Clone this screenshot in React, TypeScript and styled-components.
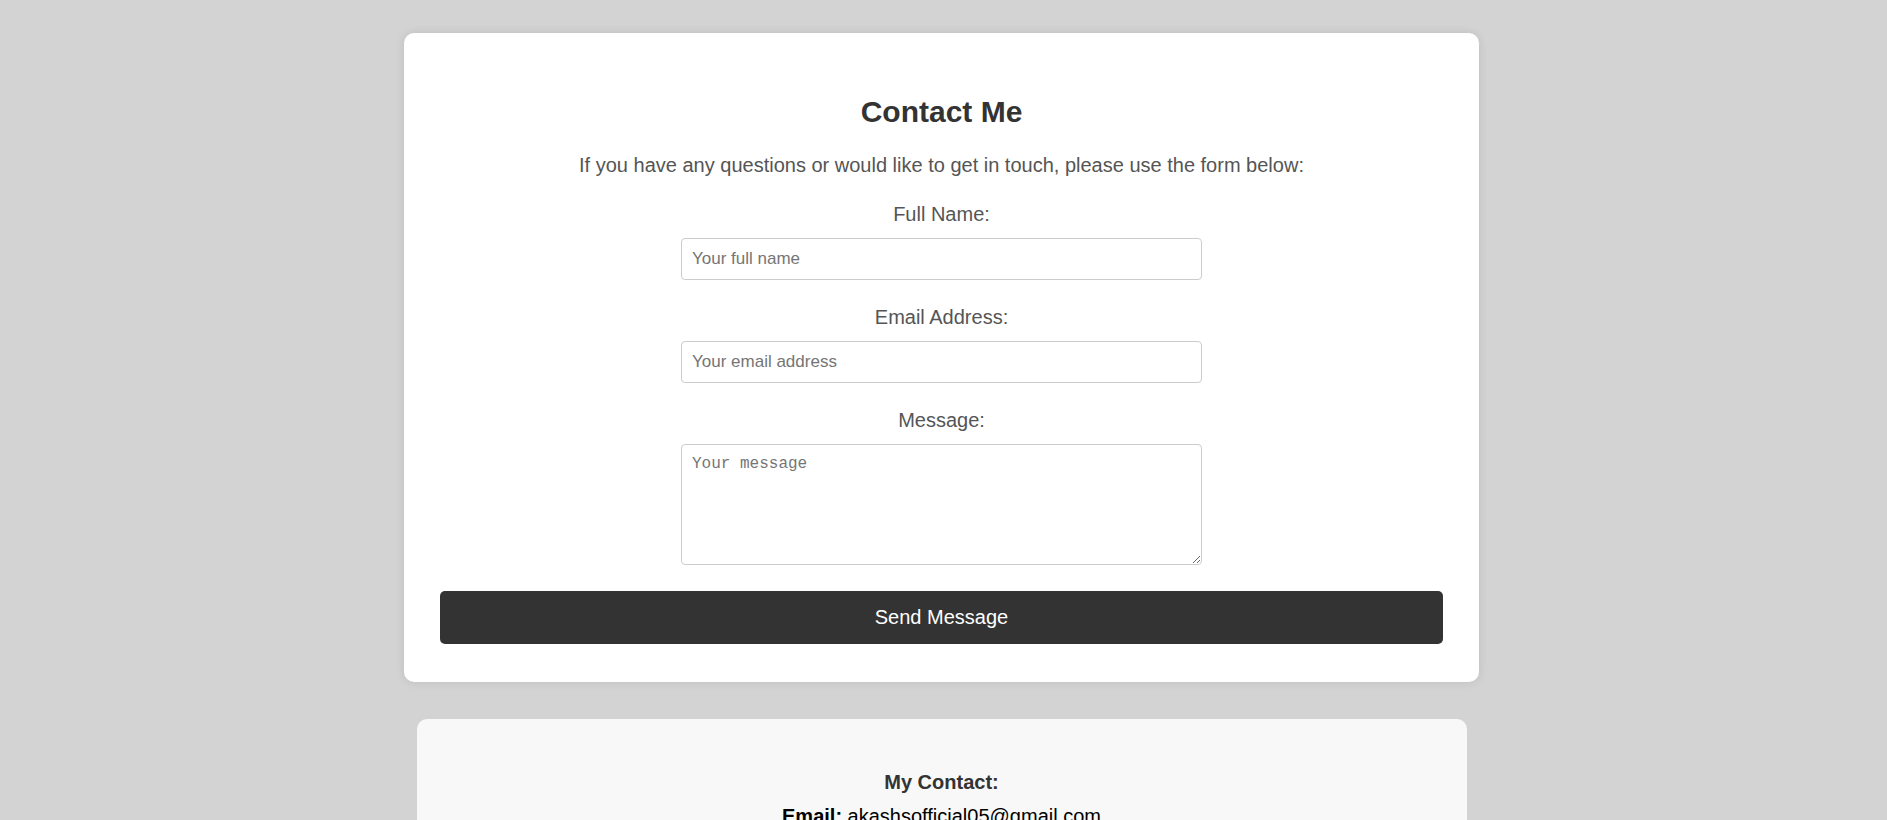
import React from "react";
import styled, { createGlobalStyle } from "styled-components";

const GlobalStyle = createGlobalStyle`
  html, body {
    margin: 0;
    padding: 0;
    background: #d3d3d3;
    font-family: "Liberation Sans", Arial, sans-serif;
  }
  * { box-sizing: border-box; }
`;

const Page = styled.main`
  display: flex;
  flex-direction: column;
  align-items: center;
  padding: 33px 4px 0 0;
  gap: 37px;
  min-height: 820px;
`;

const Card = styled.section`
  width: 1075px;
  background: #fff;
  border-radius: 10px;
  box-shadow: 0 0 10px rgba(0, 0, 0, 0.1);
  padding: 62px 36px 38px;
  display: flex;
  flex-direction: column;
  align-items: center;
  text-align: center;
`;

const Title = styled.h2`
  margin: 0 0 25px;
  font-size: 30px;
  line-height: 34px;
  font-weight: 700;
  color: #333;
`;

const Intro = styled.p`
  margin: 0 0 26px;
  font-size: 20px;
  line-height: 23px;
  color: #555;
`;

const Form = styled.form`
  width: 100%;
  display: flex;
  flex-direction: column;
  align-items: center;
`;

const Field = styled.div`
  display: flex;
  flex-direction: column;
  align-items: center;
  gap: 12px;
  margin-bottom: 26px;
`;

const Label = styled.label`
  font-size: 20px;
  line-height: 23px;
  color: #555;
`;

const Input = styled.input`
  width: 521px;
  height: 42px;
  padding: 0 10px;
  border: 1px solid #ccc;
  border-radius: 4px;
  font-family: "Liberation Sans", Arial, sans-serif;
  font-size: 17px;
  color: #333;
  background: #fff;
  &::placeholder { color: #757575; }
`;

const TextArea = styled.textarea`
  width: 521px;
  height: 121px;
  padding: 10px;
  border: 1px solid #ccc;
  border-radius: 4px;
  font-family: "Liberation Mono", "DejaVu Sans Mono", monospace;
  font-size: 16px;
  color: #333;
  background: #fff;
  resize: both;
  &::placeholder { color: #757575; }
`;

const SubmitButton = styled.button`
  width: 100%;
  height: 53px;
  border: none;
  border-radius: 5px;
  background: #333;
  color: #fff;
  font-family: "Liberation Sans", Arial, sans-serif;
  font-size: 20px;
  cursor: pointer;
`;

const InfoCard = styled.section`
  width: 1050px;
  background: #f8f8f8;
  border-radius: 10px;
  padding: 52px 36px 36px;
  display: flex;
  flex-direction: column;
  align-items: center;
  text-align: center;
  gap: 11px;
`;

const InfoTitle = styled.h3`
  margin: 0;
  font-size: 20px;
  line-height: 23px;
  font-weight: 700;
  color: #333;
`;

const InfoLine = styled.p`
  margin: 0;
  font-size: 20px;
  line-height: 23px;
  color: #000;
  b { font-weight: 700; }
`;

export default function App() {
  return (
    <>
      <GlobalStyle />
      <Page>
        <Card>
          <Title>Contact Me</Title>
          <Intro>
            If you have any questions or would like to get in touch, please use the form below:
          </Intro>
          <Form onSubmit={(e) => e.preventDefault()}>
            <Field>
              <Label htmlFor="name">Full Name:</Label>
              <Input id="name" type="text" placeholder="Your full name" />
            </Field>
            <Field>
              <Label htmlFor="email">Email Address:</Label>
              <Input id="email" type="email" placeholder="Your email address" />
            </Field>
            <Field>
              <Label htmlFor="message">Message:</Label>
              <TextArea id="message" placeholder="Your message" />
            </Field>
            <SubmitButton type="submit">Send Message</SubmitButton>
          </Form>
        </Card>
        <InfoCard>
          <InfoTitle>My Contact:</InfoTitle>
          <InfoLine>
            <b>Email:</b> akashsofficial05@gmail.com
          </InfoLine>
        </InfoCard>
      </Page>
    </>
  );
}
